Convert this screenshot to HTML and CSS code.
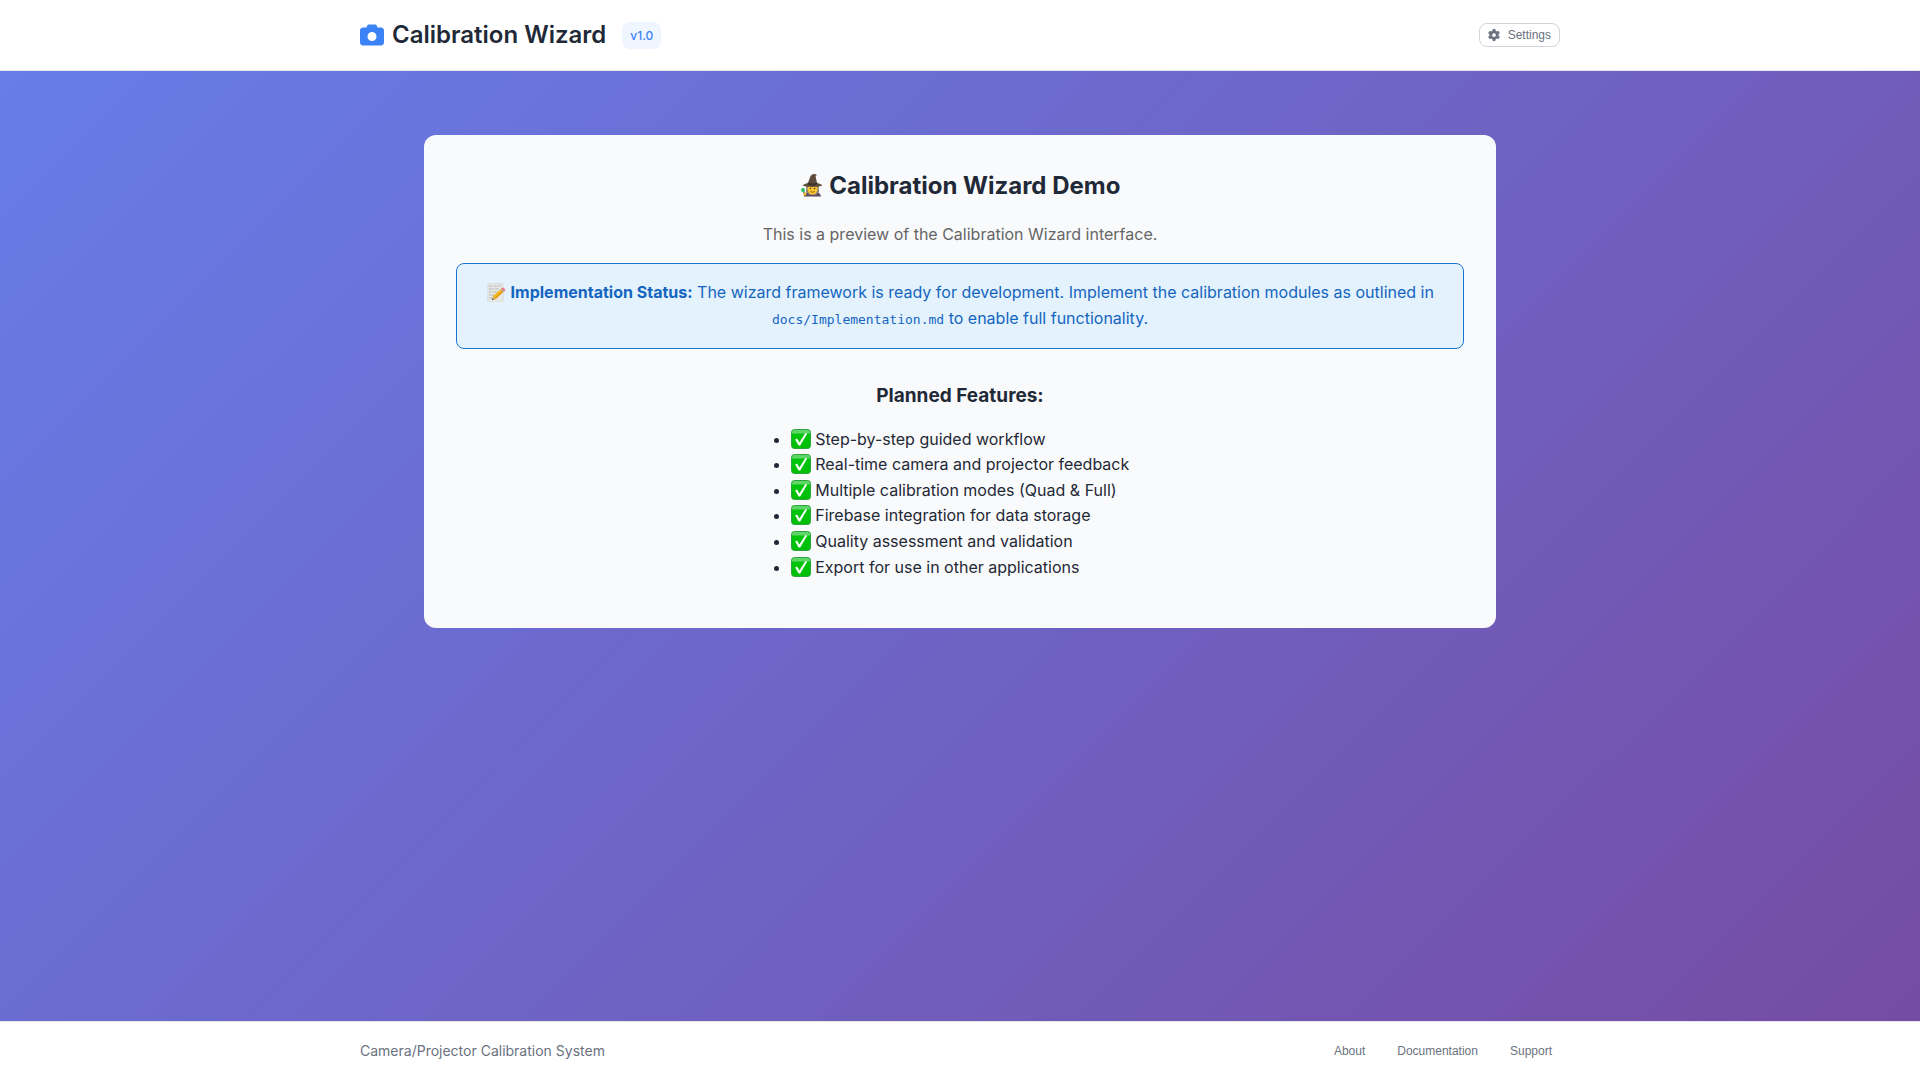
FILE: index.html
```html
<!DOCTYPE html>
<html lang="en">
<head>
  <meta charset="utf-8">
  <meta name="viewport" content="width=device-width, initial-scale=1">
  <title>Calibration Wizard</title>
  <link rel="stylesheet" href="styles.css">
</head>
<body>
  <svg class="sprite" aria-hidden="true">
    <defs>
      <linearGradient id="green" x1="0" y1="0" x2="0" y2="1">
        <stop offset="0" stop-color="#5fd667"/>
        <stop offset="0.16" stop-color="#5fd667"/>
        <stop offset="0.26" stop-color="#00c60b"/>
        <stop offset="1" stop-color="#00bd08"/>
      </linearGradient>
      <symbol id="check" viewBox="0 0 20 20">
        <rect x="0.5" y="0.5" width="19" height="19" rx="3" fill="url(#green)" stroke="#2ba43a"/>
        <path d="M4.2 10.6 6 9.6 8.4 13.6 14.4 4 16.2 4.4 9.2 16.4H7.6Z" fill="#fff"/>
      </symbol>
    </defs>
  </svg>

  <header class="header">
    <div class="bar">
      <div class="brand">
        <h1 class="brand-title">
          <svg class="brand-icon" viewBox="0 0 512 512" aria-hidden="true"><path d="M149.1 64.8 138.7 96H64C28.7 96 0 124.7 0 160V416c0 35.3 28.7 64 64 64H448c35.3 0 64-28.7 64-64V160c0-35.3-28.7-64-64-64H373.3L362.9 64.8C356.4 45.2 338.1 32 317.4 32H194.6c-20.7 0-39 13.2-45.5 32.8zM256 192a96 96 0 1 1 0 192 96 96 0 1 1 0-192z"/></svg>
          Calibration Wizard
        </h1>
        <span class="version">v1.0</span>
      </div>
      <button class="button button-outline" type="button">
        <svg class="button-icon" viewBox="0 0 512 512" aria-hidden="true"><path d="M495.9 166.6c3.2 8.7 .5 18.4-6.4 24.6l-43.3 39.4c1.1 8.3 1.7 16.8 1.7 25.4s-.6 17.1-1.7 25.4l43.3 39.4c6.9 6.2 9.6 15.9 6.4 24.6c-4.4 11.9-9.7 23.3-15.8 34.3l-4.7 8.1c-6.6 11-14 21.4-22.1 31.2c-5.9 7.2-15.7 9.6-24.5 6.8l-55.7-17.7c-13.4 10.3-28.2 18.9-44 25.4l-12.5 57.1c-2 9.1-9 16.3-18.2 17.8c-13.8 2.3-28 3.5-42.5 3.5s-28.7-1.2-42.5-3.5c-9.2-1.5-16.2-8.7-18.2-17.8l-12.5-57.1c-15.8-6.5-30.6-15.1-44-25.4L83.1 425.9c-8.8 2.8-18.6 .3-24.5-6.8c-8.1-9.8-15.5-20.2-22.1-31.2l-4.7-8.1c-6.1-11-11.4-22.4-15.8-34.3c-3.2-8.7-.5-18.4 6.4-24.6l43.3-39.4C64.6 273.1 64 264.6 64 256s.6-17.1 1.7-25.4L22.4 191.2c-6.9-6.2-9.6-15.9-6.4-24.6c4.4-11.9 9.7-23.3 15.8-34.3l4.7-8.1c6.6-11 14-21.4 22.1-31.2c5.9-7.2 15.7-9.6 24.5-6.8l55.7 17.7c13.4-10.3 28.2-18.9 44-25.4l12.5-57.1c2-9.1 9-16.3 18.2-17.8C227.3 1.2 241.5 0 256 0s28.7 1.2 42.5 3.5c9.2 1.5 16.2 8.7 18.2 17.8l12.5 57.1c15.8 6.5 30.6 15.1 44 25.4l55.7-17.7c8.8-2.8 18.6-.3 24.5 6.8c8.1 9.8 15.5 20.2 22.1 31.2l4.7 8.1c6.1 11 11.4 22.4 15.8 34.3zM256 336a80 80 0 1 0 0-160 80 80 0 1 0 0 160z"/></svg>
        Settings
      </button>
    </div>
  </header>

  <main class="main">
    <section class="card">
      <h2 class="card-title">
        <svg class="emoji emoji-large" viewBox="0 0 24 24" role="img" aria-label="Wizard">
          <path d="M4 23.500C5 19.500 8 18 12.500 18S20 19.500 21 23.500Z" fill="#574a60"/>
          <path d="M9 18h7l-3.500 5.500Z" fill="#70428a"/>
          <path d="M6.500 11.500h12l.5 7-3 3.500h-7l-3-3.500Z" fill="#8b8079"/>
          <ellipse cx="12.500" cy="16" rx="5" ry="5.600" fill="#fbc52d"/>
          <circle cx="10.500" cy="15.500" r=".8" fill="#513713"/>
          <circle cx="14.500" cy="15.500" r=".8" fill="#513713"/>
          <path d="M10.500 18.500q2 1.500 4 0" fill="none" stroke="#9b571c"/>
          <path d="M8 10 10.500 3Q12 .5 15 1l2 1-1.500 1L17 10q4 .5 5.500 2.500-4 1.500-10 1.500T2.500 12.500Q4 10.500 8 10Z" fill="#5d4d3d"/>
          <path d="M7.700 9.500q5 2 9.500 0v2q-5 1.700-9.500 0Z" fill="#3d3127"/>
          <path d="m3 16 2 7" stroke="#71543b" stroke-width="1.200"/>
          <circle cx="3" cy="17" r="2" fill="#30bd69"/>
          <circle cx="5" cy="21" r="1.500" fill="#efb62a"/>
        </svg>
        Calibration Wizard Demo
      </h2>
      <p class="intro">This is a preview of the Calibration Wizard interface.</p>

      <p class="status">
        <svg class="emoji" viewBox="0 -1 20 20" role="img" aria-label="Memo">
          <path d="M2 .5h15l.5 18.300h-16Z" fill="#e7e7e5" stroke="#d1d3d3" stroke-width=".6"/>
          <path d="M3 3h3m1 0h4m1 0h3M3 6h5m1 0h4M3 9h3m1 0h4M3 12h5M3 15h3" stroke="#aaadb0" stroke-width=".8"/>
          <path d="M6 17 7 13 15.500 5.500 18.500 8 10 16Z" fill="#f5b51d"/>
          <path d="m9 15.500 8.500-8" stroke="#c98109"/>
          <path d="m15 6 1.500-1.500q2 0 3 2.500L18 8.500Z" fill="#ee7884"/>
          <path d="m14.500 6.500.8-.8 3 2.500-.9.800Z" fill="#a8b2b5"/>
          <path d="m6 17 1-4 3 3Z" fill="#d9b373"/>
          <path d="m6 17 .5-1.800 1.200 1.300Z" fill="#3b3936"/>
        </svg>
        <strong>Implementation Status:</strong> The wizard framework is ready for development. Implement the calibration modules as outlined in <code class="path">docs/Implementation.md</code> to enable full functionality.
      </p>

      <h3 class="features-title">Planned Features:</h3>
      <ul class="features">
        <li><svg class="emoji" role="img" aria-label="Done"><use href="#check"/></svg> Step-by-step guided workflow</li>
        <li><svg class="emoji" role="img" aria-label="Done"><use href="#check"/></svg> Real-time camera and projector feedback</li>
        <li><svg class="emoji" role="img" aria-label="Done"><use href="#check"/></svg> Multiple calibration modes (Quad &amp; Full)</li>
        <li><svg class="emoji" role="img" aria-label="Done"><use href="#check"/></svg> Firebase integration for data storage</li>
        <li><svg class="emoji" role="img" aria-label="Done"><use href="#check"/></svg> Quality assessment and validation</li>
        <li><svg class="emoji" role="img" aria-label="Done"><use href="#check"/></svg> Export for use in other applications</li>
      </ul>
    </section>
  </main>

  <footer class="footer">
    <div class="bar">
      <span class="footer-text">Camera/Projector Calibration System</span>
      <nav class="footer-nav">
        <button class="button" type="button">About</button>
        <button class="button" type="button">Documentation</button>
        <button class="button" type="button">Support</button>
      </nav>
    </div>
  </footer>
</body>
</html>
```
FILE: styles.css
```css
* {
  box-sizing: border-box;
  margin: 0;
  padding: 0;
}

body {
  display: flex;
  flex-direction: column;
  min-height: 100vh;
  background: linear-gradient(135deg, #667eea 0%, #764ba2 100%);
  color: #1f2937;
  font-family: Inter, "Liberation Sans", sans-serif;
  font-size: 16px;
  line-height: 1.6;
}

.sprite {
  position: absolute;
  width: 0;
  height: 0;
}

.header,
.footer {
  padding: 16px;
  background: #fff;
}

.header {
  border-bottom: 1px solid #e5e7eb;
}

.footer {
  border-top: 1px solid #e5e7eb;
}

.bar {
  display: flex;
  align-items: center;
  justify-content: space-between;
  max-width: 1200px;
  min-height: 26px;
  margin: 0 auto;
}

.brand {
  display: flex;
  align-items: center;
  gap: 16px;
}

.brand-title {
  display: flex;
  align-items: center;
  gap: 8px;
  font-size: 24px;
  font-weight: 600;
}

.brand-icon {
  width: 24px;
  height: 24px;
  fill: #3b82f6;
}

.version {
  padding: 4px 8px;
  border-radius: 8px;
  background: #eff6ff;
  color: #3b82f6;
  font-size: 12px;
  font-weight: 500;
}

.button {
  display: flex;
  align-items: center;
  gap: 8px;
  padding: 4px 8px;
  border: 0;
  border-radius: 8px;
  background: transparent;
  color: #6b7280;
  font-family: "Liberation Sans", Arial, sans-serif;
  font-size: 12px;
  cursor: pointer;
}

.button-outline {
  border: 1px solid #d1d5db;
}

.button-icon {
  width: 12px;
  height: 12px;
  fill: currentColor;
}

.main {
  flex: 1;
  width: 100%;
  max-width: 1200px;
  margin: 0 auto;
  padding: 64px;
}

.card {
  padding: 32px 32px 48px;
  border-radius: 12px;
  background: #f9fafb;
  text-align: center;
}

.card-title {
  margin-bottom: 16px;
  font-size: 24px;
}

.intro {
  margin-bottom: 16px;
  color: #666;
}

.status {
  margin-bottom: 32px;
  padding: 16px;
  border: 1px solid #1976d2;
  border-radius: 8px;
  background: #e3f2fd;
  color: #1565c0;
}

.path {
  font-family: "DejaVu Sans Mono", monospace;
  font-size: 13px;
}

.features-title {
  margin-bottom: 16px;
  font-size: 19px;
  line-height: 30px;
}

.features {
  width: fit-content;
  margin: 0 auto;
  text-align: left;
}

.emoji {
  width: 20px;
  height: 20px;
  vertical-align: -4px;
}

.emoji-large {
  width: 24px;
  height: 24px;
  vertical-align: -3px;
}

.footer-text {
  color: #6b7280;
  font-size: 14px;
}

.footer-nav {
  display: flex;
  gap: 16px;
}
```
